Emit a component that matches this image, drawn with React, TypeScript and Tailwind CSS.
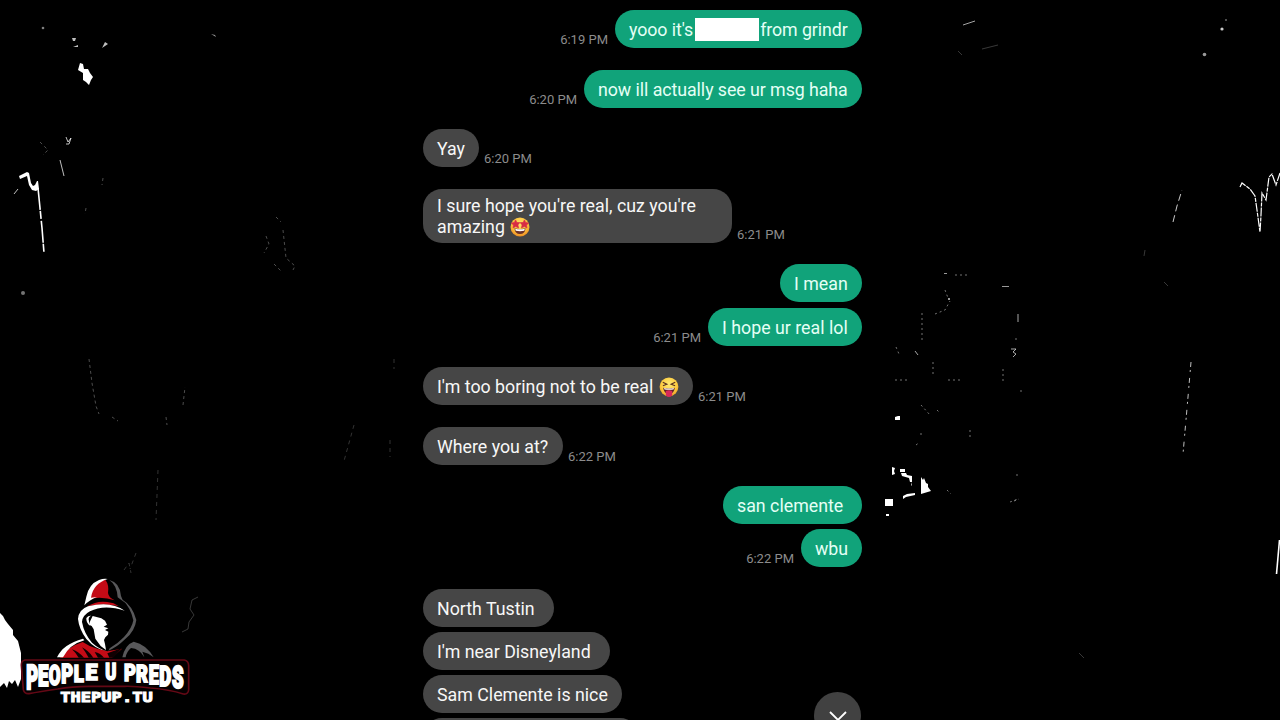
import { ReactNode } from 'react';
import { clsx } from 'clsx';

type Bubble = {
  content: ReactNode;
  size: string;
  time?: string;
};

type Group = {
  id: number;
  sent: boolean;
  bubbles: Bubble[];
};

function StarStruck() {
  return (
    <svg viewBox="0 0 20 20" className="ml-px inline-block h-5 w-5 align-[-4px]">
      <defs>
        <radialGradient id="star-face" cx="50%" cy="35%" r="65%">
          <stop offset="0" stopColor="#ffe36a" />
          <stop offset="0.65" stopColor="#fbc03b" />
          <stop offset="1" stopColor="#ee8c22" />
        </radialGradient>
      </defs>
      <circle cx="10" cy="10" r="9.5" fill="url(#star-face)" />
      <path d="M5.6 2.9l1.3 2.6 3 .1-2 2.3.7 3-2.9-1.3-2.7 1.5.4-3L1.3 6l3-.5z" fill="#d82c45" stroke="#d82c45" strokeWidth=".6" />
      <path d="M14.4 2.9l-1.3 2.6-3 .1 2 2.3-.7 3 2.9-1.3 2.7 1.5-.4-3L18.7 6l-3-.5z" fill="#d82c45" stroke="#d82c45" strokeWidth=".6" />
      <path d="M4.5 11.3q5.5 1.6 11 0-.3 5.8-5.5 5.8t-5.5-5.8z" fill="#6b3028" />
      <path d="M5.2 11.8q4.8 1.1 9.6 0l-.5 2q-4.3.8-8.6 0z" fill="#fff" />
    </svg>
  );
}

function TongueOut() {
  return (
    <svg viewBox="0 0 20 20" className="ml-px inline-block h-5 w-5 align-[-4px]">
      <defs>
        <radialGradient id="tongue-face" cx="50%" cy="35%" r="65%">
          <stop offset="0" stopColor="#ffec75" />
          <stop offset="0.65" stopColor="#fccb3f" />
          <stop offset="1" stopColor="#f0a028" />
        </radialGradient>
      </defs>
      <circle cx="10" cy="9.8" r="9.4" fill="url(#tongue-face)" />
      <path d="M3.8 5.3l4 1.9-3.9 1.5M16.2 5.3l-4 1.9 3.9 1.5" fill="none" stroke="#5c3320" strokeWidth="1.2" />
      <path d="M4.2 10.7q5.8 1.4 11.6 0-.5 6-5.8 6t-5.8-6z" fill="#5b2325" />
      <path d="M5 11.1q5 1 10 0l-.5 1.300q-4.500.700-9 0z" fill="#fff" />
      <path d="M6.800 14q3.200-1.700 6.400 0v3.300q0 2.600-3.200 2.600t-3.200-2.600z" fill="#d62a5a" />
    </svg>
  );
}

const groups: Group[] = [
  {
    id: 1,
    sent: true,
    bubbles: [
      {
        content: (
          <span className="flex items-center tracking-[-0.08px]">
            yooo it's
            <span className="ml-[2px] mr-px h-[23px] w-[64px] bg-white" />
            from grindr
          </span>
        ),
        size: 'w-[247px] h-[38px]',
        time: '6:19 PM',
      },
    ],
  },
  {
    id: 2,
    sent: true,
    bubbles: [
      {
        content: <span className="tracking-[-0.06px]">now ill actually see ur msg haha</span>,
        size: 'w-[278px] h-[38px]',
        time: '6:20 PM',
      },
    ],
  },
  { id: 3, sent: false, bubbles: [{ content: 'Yay', size: 'w-[56px] h-[38px]', time: '6:20 PM' }] },
  {
    id: 4,
    sent: false,
    bubbles: [
      {
        content: (
          <span>
            I sure hope you're real, cuz you're
            <br />
            amazing <StarStruck />
          </span>
        ),
        size: 'w-[309px] h-[54px]',
        time: '6:21 PM',
      },
    ],
  },
  {
    id: 5,
    sent: true,
    bubbles: [
      { content: 'I mean', size: 'w-[82px] h-[38px]' },
      { content: 'I hope ur real lol', size: 'w-[154px] h-[38px]', time: '6:21 PM' },
    ],
  },
  {
    id: 6,
    sent: false,
    bubbles: [
      {
        content: (
          <span>
            I'm too boring not to be real <TongueOut />
          </span>
        ),
        size: 'w-[270px] h-[38px]',
        time: '6:21 PM',
      },
    ],
  },
  { id: 7, sent: false, bubbles: [{ content: 'Where you at?', size: 'w-[140px] h-[38px]', time: '6:22 PM' }] },
  {
    id: 8,
    sent: true,
    bubbles: [
      { content: 'san clemente', size: 'w-[139px] h-[38px]' },
      { content: 'wbu', size: 'w-[61px] h-[38px]', time: '6:22 PM' },
    ],
  },
  {
    id: 9,
    sent: false,
    bubbles: [
      { content: 'North Tustin', size: 'w-[131px] h-[38px]' },
      { content: "I'm near Disneyland", size: 'w-[187px] h-[38px]' },
      { content: 'Sam Clemente is nice', size: 'w-[199px] h-[38px]' },
      { content: '', size: 'w-[216px] h-[38px]' },
    ],
  },
];

function MessageRow({ bubble, sent }: { bubble: Bubble; sent: boolean }) {
  return (
    <div className={clsx('flex items-end', sent ? 'flex-row-reverse gap-[7px]' : 'gap-[5px]')}>
      <div
        className={clsx(
          'flex shrink-0 items-center whitespace-nowrap rounded-[19px] pl-[14px] pt-px text-[17.8px] leading-[21px]',
          bubble.size,
          sent ? 'bg-[#11a37a] text-[#e4fff5]' : 'bg-[#464646] text-[#f7f7f7]'
        )}
      >
        {bubble.content}
      </div>
      {bubble.time && (
        <span className="whitespace-nowrap text-[13px] leading-4 text-[#8c8c8c]">{bubble.time}</span>
      )}
    </div>
  );
}

// Stray light marks scattered around the chat
function Backdrop() {
  return (
    <svg viewBox="0 0 1280 720" className="absolute inset-0 h-full w-full" fill="none">
      <g fill="#fff">
        <path d="M80 63l3 1 1 5 4 0 2 4 3 4-2 3-2 5-3-3-3-2 0-7-5-3z" />
        <path d="M19 176l8-4 2 1 2 10 2 3 2-1 2-4 1 0 1 8-3 2-4-1-3-5-2-9-7 3z" />
        <path d="M0 613l3 3 2 4 3 4 5 6 0 5 5 6 3 12v26l-3 8-3-7-3 4-3-3-2 7-3-5-4 4z" />
        <path d="M921 477l2 3 1-2 2 5 2 1 0 3 3 4-10 3zM885 499h8v7h-8zM895 417l3-1h2v4h-5zM900 469h5v3h-5zM901 473l5 0 1 2 5 1v6l-2 0-1-4-7-2zM892 467l3 1-1 3 1 3-3 1zM903 496l4-2 8-1 0 2-9 2-3 2zM886 514h3v2h-3zM911 482l1 4-1-1z" />
        <path d="M72 38l4 0-1 3-2 0zM102 48l3-6 3 2zM73 47l5-2v2z" opacity=".75" />
        <circle cx="43" cy="28" r="1.3" opacity=".5" />
        <circle cx="23" cy="293" r="2" opacity=".45" />
        <circle cx="1222" cy="29" r="1.6" opacity=".8" />
        <circle cx="1204.500" cy="54.500" r="1.8" opacity=".6" />
        <circle cx="1226" cy="20" r="1" opacity=".4" />
        <path d="M211 34l4 1 1 2zM944 273h3v1h-3zM1002 286h7v1h-7zM948 298h2v2h-2z" opacity=".6" />
      </g>
      <g stroke="#fff">
        <path d="M38 188l2 20 2 20 2 25" strokeWidth="1.6" strokeDasharray="22 1 8 2" />
        <path d="M60 160l4 16M66 137l2 5 3-4-2 6-3 0M14 194l4-5" opacity=".75" />
        <path d="M1240 187l2-4 8 6 5 7 2 14 3 22 1-17 1-22 4 7 3-23 3-3 4 11 4-12" strokeWidth="1.2" strokeDasharray="9 1 4 1" />
        <path d="M1173 222l4-16 5-16" strokeDasharray="7 4" opacity=".8" />
        <path d="M1191 362l-3 35-5 57" strokeDasharray="5 3 2 6" opacity=".75" />
        <path d="M1279.500 540l-3 34" strokeWidth="1.6" />
        <path d="M1011 349h5l-3 3 3 2-3 3M915 351l3 4M963 25l12-4M1018 314v8" opacity=".65" />
        <path d="M982 49l16-4M958 51l4 4" opacity=".22" />
        <path d="M895 380h14M922 313v28M935 314l10-4 5-9M896 347l3 7M933 362v14M948 380h14M1003 369v12M1016 338v4M921 405l9 10M937 410l2 2M1021 390v3M970 430v9M921 433v5M916 445l4-3M1010 502l8-3M947 490l4 4M1014 501l5-2M1017 474v3M945 290l3 8M955 275h13" strokeDasharray="2 3" opacity=".45" />
        <path d="M89 359l3 24 4 23 3 8M40 142l8 8-5 5M103 178l-1 7M86 208l-1 6M276 217l5 5M266 236l3 8-5 9M283 230l3 28 9 8-2 4M274 264l8 8M112 417l6 4M183 405l2-18M166 417l1 8" strokeDasharray="3 3" opacity=".3" />
        <path d="M394 359v10M354 425l-10 36M390 440v17M158 470l-2 50M136 553l-6 16M124 570l5-7 2 10" strokeDasharray="4 4" opacity=".2" />
        <path d="M198 597l-6 3-2 9 4 6-5 7-1 7-6 3M1079 653l5 5M1164 282l4 4M1145 250l-1 6" opacity=".22" />
      </g>
    </svg>
  );
}

// glyph, left, top, bottom, horizontal stretch
const titleLetters: [string, number, number, number, number][] = [
  ['P', 79, 314, 386, 1.13],
  ['E', 114, 315, 379, 1.15],
  ['O', 146, 315, 374, 1.06],
  ['P', 184, 314, 369, 1.13],
  ['L', 221, 313, 365, 1.15],
  ['E', 256, 311, 361, 1.36],
  ['U', 316, 308, 359, 1.04],
  ['P', 372, 311, 362, 1.13],
  ['R', 408, 313, 367, 1.13],
  ['E', 446, 315, 371, 1.12],
  ['D', 478, 315, 377, 1.15],
  ['S', 516, 314, 384, 1.15],
];

function Logo() {
  return (
    <svg viewBox="0 0 660 480" className="absolute bottom-0 left-0 h-[160px] w-[220px]">
      <path d="M258 108q18-46 62-50 38 8 44 52l40 70-16 44-66 50-58-34-22-60z" fill="#000" />
      {/* hood */}
      <path d="M262 118q8-50 54-59 12 16 8 40 2 14 20 22-40-14-82-3z" fill="#c40b16" />
      <path d="M262 139q28-18 60-13 20 2 34 12-46-10-94 1z" fill="#c40b16" />
      <path d="M253 136l6-26q8-38 38-50 14-5 26-3-44 14-50 56l18-2q-22 8-38 25z" fill="#fff" />
      <path d="M328 60q32 8 35 48 4 14 12 20l-22-16q-2-36-25-52z" fill="#58585a" />
      <path d="M366 118q32 20 43 62-4 34-34 58-24 24-50 34l4-7q24-14 43-34 24-26 28-50-8-38-34-63z" fill="#58585a" />
      <path d="M374 152q-62-20-104 2-23 12-24 32 6 34 30 62 20 18 43 25-32-4-60-36-22-30-25-60 2-28 30-38 68-18 110 13z" fill="#fff" />
      {/* face */}
      <path d="M278 168l26 7 11 7 6 12-10 6 14 5-10 5 10 5-1 9-8 8-4 8 3 12 3 18-16-12-16-22-5-28-6-10-8-4 4-12z" fill="#fff" />
      <path d="M259 174q6-8 14-7-10 6-6 16 1 8 3 14-12-8-11-23z" fill="#fff" />
      {/* shoulders */}
      <path d="M180 293q22-32 68-47 20 14 44 20l30 8 44-8-30 27z" fill="#c40b16" />
      <path d="M171 292q18-40 78-56l4 5q-44 12-64 51z" fill="#fff" />
      <path d="M216 268q18 6 36 25h-16q-8-14-20-25zM246 262q20 10 34 31h-14q-10-18-20-31zM284 276q18 4 28 17h-18zM322 280l44-16-26 29h-12z" fill="#100002" />
      <path d="M367 292q8-38 34-47 38 8 60 47l-16-11-18-6 6 17q-14-26-40-28-14 12-16 28z" fill="#58585a" />
      <path
        d="M75 300h478q12 2 13 16v74q-2 14-16 12-42-14-99-18-50-6-77-5H266q-50 0-93 8-54 8-86 14-14 1-17-12l-6-74q0-13 11-15z"
        fill="#050001"
        stroke="#640815"
        strokeWidth="5"
      />
      <g fontFamily="Roboto, sans-serif" fontWeight="900" fontSize="42" fill="#fff" stroke="#fff" strokeWidth="3">
        {titleLetters.map(([glyph, left, top, bottom, stretch], i) => (
          <text key={i} transform={`translate(${left} ${bottom}) scale(${stretch * 1.15} ${(bottom - top) / 30.5})`}>
            {glyph}
          </text>
        ))}
      </g>
      <text
        x="181"
        y="425"
        textLength="277"
        lengthAdjust="spacingAndGlyphs"
        fontFamily="'DejaVu Sans Mono', monospace"
        fontWeight="700"
        fontSize="43"
        fill="#fff"
        stroke="#fff"
        strokeWidth="3"
      >
        THEPUP.TU
      </text>
    </svg>
  );
}

export default function App() {
  return (
    <main className="relative h-[720px] w-[1280px] overflow-hidden bg-black font-['Roboto',sans-serif]">
      <Backdrop />
      <section className="relative ml-[423px] flex w-[439px] flex-col gap-[21.5px] pt-[10.4px]">
        {groups.map((group) => (
          <div key={group.id} className="flex flex-col gap-[5.2px]">
            {group.bubbles.map((bubble, i) => (
              <MessageRow key={i} bubble={bubble} sent={group.sent} />
            ))}
          </div>
        ))}
      </section>
      <Logo />
      <button
        aria-label="Scroll to latest"
        className="absolute left-[814px] top-[692px] flex size-[47px] items-center justify-center rounded-full bg-[#414141]"
      >
        <svg viewBox="0 0 18 10" className="h-[10px] w-[18px]" fill="none" stroke="#fff" strokeWidth="1.8">
          <path d="M1 1L9 9 17 1" />
        </svg>
      </button>
    </main>
  );
}
